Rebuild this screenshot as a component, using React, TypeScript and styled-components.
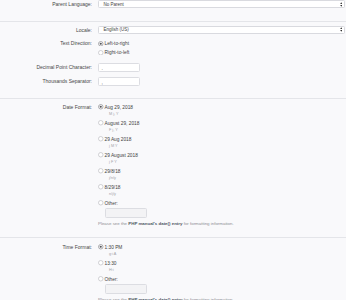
import React from "react"
import styled, { createGlobalStyle } from "styled-components"

const GlobalStyle = createGlobalStyle`
	html, body {
		margin: 0;
		padding: 0;
		background: #f9f9fb;
	}
	body {
		font-family: "Liberation Sans", Arial, sans-serif;
		color: #474747;
		overflow: hidden;
	}
`

const Page = styled.div`
	width: 346px;
	height: 300px;
	overflow: hidden;
`

const Section = styled.div<{ $top: number; $bottom: number }>`
	display: flex;
	flex-direction: column;
	gap: 5.5px;
	padding: ${p => p.$top}px 0 ${p => p.$bottom}px;
	border-bottom: 1px solid #e4e5e9;
`

const Row = styled.div`
	display: grid;
	grid-template-columns: 92px 1fr;
	column-gap: 6px;
	align-items: start;
`

const Label = styled.div<{ $lh?: number }>`
	text-align: right;
	font-size: 5px;
	line-height: ${p => p.$lh ?? 8}px;
	white-space: nowrap;
`

const Control = styled.div`
	display: flex;
	flex-direction: column;
	align-items: flex-start;
	min-width: 0;
`

const Select = styled.div`
	box-sizing: border-box;
	width: 247px;
	height: 8px;
	display: flex;
	align-items: center;
	justify-content: space-between;
	padding: 0 2px 0 4.5px;
	background: #fff;
	border: 0.6px solid #d9dadf;
	border-radius: 1.5px;
	font-size: 4.5px;
	color: #3d3d3d;
`

const TextInput = styled.div<{ $disabled?: boolean; $indent?: number }>`
	box-sizing: border-box;
	width: 42px;
	height: ${p => (p.$disabled ? 10 : 9)}px;
	margin-left: ${p => p.$indent ?? 0}px;
	padding: 0 2.5px;
	background: ${p => (p.$disabled ? "#f3f3f5" : "#fff")};
	border: 0.6px solid #dcdde2;
	border-radius: 1.5px;
	font-size: 5px;
	line-height: 8px;
	color: #3d3d3d;
`

const OptionList = styled.div<{ $gap: number }>`
	display: flex;
	flex-direction: column;
	gap: ${p => p.$gap}px;
`

const Option = styled.div`
	display: flex;
	flex-direction: column;
`

const OptionLine = styled.div<{ $lh: number }>`
	display: flex;
	align-items: center;
	gap: 1px;
	height: ${p => p.$lh}px;
	font-size: 4.8px;
	color: #3f3f3f;
	white-space: nowrap;
`

const Hint = styled.div`
	padding-left: 11px;
	height: 6px;
	line-height: 6px;
	font-size: 3.8px;
	color: #a3a3a8;
`

const Help = styled.div`
	margin-top: 3px;
	font-size: 4.4px;
	line-height: 6px;
	color: #8e8e93;
	white-space: nowrap;

	b {
		color: #4d5563;
	}
`

const RadioDot = ({ checked }: { checked?: boolean }) => (
	<svg width="5.5" height="5.5" viewBox="0 0 11 11">
		<circle cx="5.5" cy="5.5" r="4.5" fill="#fff" stroke={checked ? "#6d6d72" : "#aeaeb3"} strokeWidth="1.1" />
		{checked && <circle cx="5.5" cy="5.5" r="2.2" fill="#55555a" />}
	</svg>
)

const Arrows = () => (
	<svg width="2.5" height="5" viewBox="0 0 5 10">
		<path d="M2.5 0.5 L4.6 4 L0.4 4 Z" fill="#333" />
		<path d="M2.5 9.5 L4.6 6 L0.4 6 Z" fill="#333" />
	</svg>
)

type Opt = { text: string; hint?: string; checked?: boolean }

const dateOpts: Opt[] = [
	{ text: "Aug 29, 2018", hint: "M j, Y", checked: true },
	{ text: "August 29, 2018", hint: "F j, Y" },
	{ text: "29 Aug 2018", hint: "j M Y" },
	{ text: "29 August 2018", hint: "j F Y" },
	{ text: "29/8/18", hint: "j/n/y" },
	{ text: "8/29/18", hint: "n/j/y" },
]

const timeOpts: Opt[] = [
	{ text: "1:30 PM", hint: "g:i A", checked: true },
	{ text: "13:30", hint: "H:i" },
]

function FormatChoices({ opts }: { opts: Opt[] }) {
	return (
		<Control>
			<OptionList $gap={2}>
				{opts.map(o => (
					<Option key={o.text}>
						<OptionLine $lh={8}>
							<RadioDot checked={o.checked} />
							{o.text}
						</OptionLine>
						<Hint>{o.hint}</Hint>
					</Option>
				))}
				<Option>
					<OptionLine $lh={8}>
						<RadioDot />
						Other:
					</OptionLine>
					<TextInput $disabled $indent={7} style={{ marginTop: 1 }} />
				</Option>
			</OptionList>
			<Help>
				Please see the <b>PHP manual's date() entry</b> for formatting information.
			</Help>
		</Control>
	)
}

export default function App() {
	return (
		<Page>
			<GlobalStyle />
			<Section $top={0} $bottom={13}>
				<Row>
					<Label>Parent Language:</Label>
					<Select>
						No Parent
						<Arrows />
					</Select>
				</Row>
			</Section>
			<Section $top={3.5} $bottom={12}>
				<Row>
					<Label>Locale:</Label>
					<Select>
						English (US)
						<Arrows />
					</Select>
				</Row>
				<Row>
					<Label $lh={9}>Text Direction:</Label>
					<OptionList $gap={0}>
						<OptionLine $lh={9}>
							<RadioDot checked />
							Left-to-right
						</OptionLine>
						<OptionLine $lh={9}>
							<RadioDot />
							Right-to-left
						</OptionLine>
					</OptionList>
				</Row>
				<Row>
					<Label $lh={9}>Decimal Point Character:</Label>
					<TextInput>.</TextInput>
				</Row>
				<Row>
					<Label $lh={9}>Thousands Separator:</Label>
					<TextInput>,</TextInput>
				</Row>
			</Section>
			<Section $top={4} $bottom={10}>
				<Row>
					<Label>Date Format:</Label>
					<FormatChoices opts={dateOpts} />
				</Row>
			</Section>
			<Section $top={5} $bottom={10}>
				<Row>
					<Label>Time Format:</Label>
					<FormatChoices opts={timeOpts} />
				</Row>
			</Section>
		</Page>
	)
}
